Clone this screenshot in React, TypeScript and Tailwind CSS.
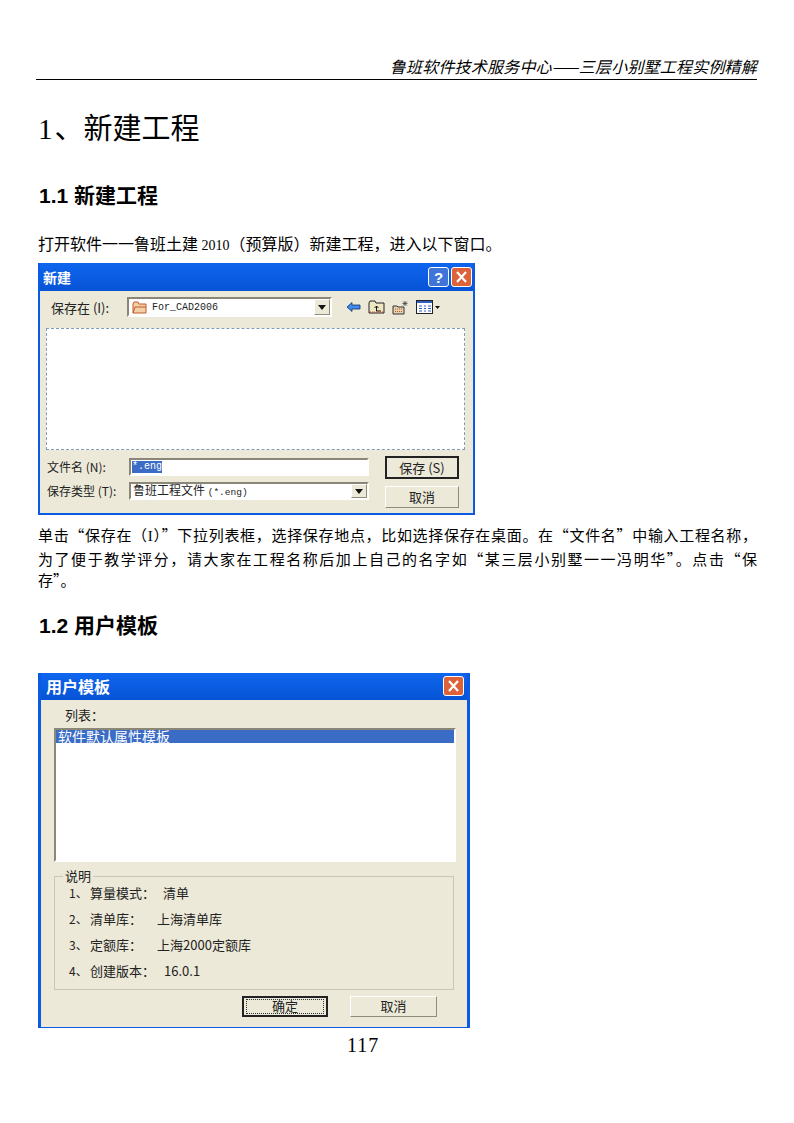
const ui = "font-['Noto_Sans_CJK_SC','Liberation_Sans',sans-serif]";
const latin = "font-['Liberation_Serif',serif]";
const mono = "font-['Liberation_Mono',monospace]";
const heading = "font-['Liberation_Sans','Noto_Sans_CJK_SC',sans-serif]";
const raised =
  "border border-t-white border-l-white border-r-[#8f8c7c] border-b-[#8f8c7c] bg-[#ece9d8]";
const sunken =
  "border-2 border-t-[#8a8778] border-l-[#8a8778] border-r-white border-b-white bg-white";

const ArrowDown = () => (
  <span className={`flex w-[16px] h-full items-center justify-center ${raised}`}>
    <svg width="8" height="5" viewBox="0 0 8 5">
      <path d="M0 0h8L4 5z" fill="#111" />
    </svg>
  </span>
);

const CloseBtn = () => (
  <span className="flex h-[20px] w-[21px] items-center justify-center rounded-[3px] border border-white bg-[#de6239]">
    <svg width="13" height="12" viewBox="0 0 13 12">
      <path d="M2 1l9 10M11 1L2 11" stroke="#fff" strokeWidth="2.2" fill="none" />
    </svg>
  </span>
);

const HelpBtn = () => (
  <span className="flex h-[20px] w-[21px] items-center justify-center rounded-[3px] border border-white bg-[#3f74d9] text-[15px] font-bold leading-none text-white font-['Liberation_Sans',sans-serif]">
    ?
  </span>
);

const ToolIcons = () => (
  <div className="ml-[14px] flex items-center gap-[7px]">
    <svg width="15" height="12" viewBox="0 0 15 12">
      <path d="M1 6l5-4.500V4h8v4H6v2.500z" fill="#3f8ae8" stroke="#12306e" strokeWidth="0.8" />
    </svg>
    <svg width="17" height="14" viewBox="0 0 17 14">
      <path d="M1 3l1-2h5l1 2h8v10H1z" fill="#efe6c4" stroke="#222" />
      <path d="M8.500 11V6M6.500 8l2-2 2 2M8.500 11H13" stroke="#111" fill="none" />
      <path d="M2 12h13" stroke="#d2452a" strokeDasharray="1 1" />
    </svg>
    <svg width="17" height="15" viewBox="0 0 17 15">
      <path d="M1 6h4l1 1h6v7H1z" fill="#e6d2b0" stroke="#333" />
      <path d="M3 9h7M3 11.500h7" stroke="#c4562e" strokeDasharray="1 1" />
      <path d="M13 1v5M10.500 3.500h5M11 1.500l4 4M15 1.500l-4 4" stroke="#444" strokeWidth="0.8" />
    </svg>
    <div className="flex items-center gap-[2px]">
      <svg width="17" height="14" viewBox="0 0 17 14">
        <rect x="0.500" y="0.500" width="16" height="13" fill="#fff" stroke="#222" />
        <path d="M1 1h15v2H1z" fill="#2f5fc4" />
        <path d="M3 6h3M8 6h2M12 6h3M3 8.500h3M8 8.500h2M12 8.500h3M3 11h3M8 11h2M12 11h3" stroke="#2f5fc4" />
      </svg>
      <svg width="5" height="3" viewBox="0 0 5 3">
        <path d="M0 0h5L2.500 3z" fill="#111" />
      </svg>
    </div>
  </div>
);

const SaveDialog = () => (
  <div className={`flex h-[252px] w-[437px] flex-col bg-[#0a5ae4] px-[2px] pb-[2px] ${ui}`}>
    <div className="flex h-[28px] shrink-0 items-center justify-between bg-gradient-to-b from-[#0f66ee] to-[#0753d6] pl-[3px] pr-[1px]">
      <span className="text-[14px] font-bold text-white">新建</span>
      <div className="flex gap-[2px]">
        <HelpBtn />
        <CloseBtn />
      </div>
    </div>
    <div className="flex-1 bg-[#ece9d8] px-[6px] pt-[6px] text-[12px] text-[#222]">
      <div className="flex h-[20px] items-center pl-[5px]">
        <span className="w-[76px] text-[13px] leading-none">保存在 (I):</span>
        <div className={`flex h-[20px] w-[205px] items-center justify-between ${sunken}`}>
          <span className={`flex items-center gap-[5px] pl-[3px] text-[10px] ${mono}`}>
            <svg width="15" height="13" viewBox="0 0 15 13">
              <path d="M1 3l1-2h4l1 2h7v9H1z" fill="#f3cfa6" stroke="#c45a2c" />
              <path d="M1 12l2-6h11" fill="none" stroke="#c45a2c" />
            </svg>
            For_CAD2006
          </span>
          <ArrowDown />
        </div>
        <ToolIcons />
      </div>
      <div className="mt-[11px] h-[122px] w-[419px] border border-dashed border-[#7f9db9] bg-white" />
      <div className="mt-[6px] flex items-start pl-[1px]">
        <div className="flex w-[322px] flex-col gap-[6px] pt-[2px]">
          <div className="flex h-[18px] items-center">
            <span className="w-[82px] leading-none">文件名 (N):</span>
            <div className={`flex h-[18px] flex-1 items-center pl-[1px] ${sunken}`}>
              <span className={`bg-[#3a6cc6] text-[10px] leading-[12px] text-white ${mono}`}>*.eng</span>
            </div>
          </div>
          <div className="flex h-[18px] items-center">
            <span className="w-[82px] leading-none">保存类型 (T):</span>
            <div className={`flex h-[18px] flex-1 items-center justify-between pl-[2px] ${sunken}`}>
              <span className="leading-none">
                鲁班工程文件 <span className={`text-[9.500px] ${mono}`}>(*.eng)</span>
              </span>
              <ArrowDown />
            </div>
          </div>
        </div>
        <div className="ml-[16px] flex w-[74px] flex-col gap-[7px] text-[13px]">
          <div className="flex h-[23px] items-center justify-center border-2 border-[#222] bg-[#ece9d8]">保存 (S)</div>
          <div className={`flex h-[22px] items-center justify-center ${raised}`}>取消</div>
        </div>
      </div>
    </div>
  </div>
);

const notes = [
  { num: "1、", label: "算量模式：", value: "清单", pad: "pl-[8px]" },
  { num: "2、", label: "清单库：", value: "上海清单库", pad: "pl-[15px]" },
  { num: "3、", label: "定额库：", value: "上海2000定额库", pad: "pl-[15px]" },
  { num: "4、", label: "创建版本：", value: "16.0.1", pad: "pl-[9px]" },
];

const TemplateDialog = () => (
  <div className={`flex h-[355px] w-[432px] flex-col bg-[#0a5ae4] px-[3px] pb-[1px] ${ui}`}>
    <div className="flex h-[27px] shrink-0 items-center justify-between rounded-t-[4px] bg-gradient-to-b from-[#0f66ee] to-[#0753d6] pl-[5px] pr-[3px]">
      <span className="text-[16px] font-bold text-white">用户模板</span>
      <CloseBtn />
    </div>
    <div className="flex flex-1 flex-col bg-[#ece9d8] px-[13px] pt-[7px] text-[13px] text-[#222]">
      <span className="pl-[11px] leading-[16px]">列表：</span>
      <div className={`mt-[5px] h-[134px] w-[402px] ${sunken}`}>
        <div className="h-[13px] bg-[#3a6cc6] pl-[2px] text-[14px] leading-[13px] text-white">软件默认属性模板</div>
      </div>
      <div className="relative mt-[14px] flex h-[114px] w-[400px] flex-col gap-[10px] border border-[#c9c6b4] pl-[14px] pt-[8px]">
        <span className="absolute -top-[8px] left-[8px] bg-[#ece9d8] px-[2px] text-[13px] leading-[14px]">说明</span>
        {notes.map((note) => (
          <div key={note.num} className="flex h-[16px] items-center leading-none">
            <span className="w-[21px] text-[12px]">{note.num}</span>
            <span>{note.label}</span>
            <span className={note.pad}>{note.value}</span>
          </div>
        ))}
      </div>
      <div className="mt-[6px] flex gap-[22px] pl-[188px]">
        <div className="flex h-[21px] w-[86px] items-center justify-center border-2 border-[#222] bg-[#ece9d8]">
          <span className="flex h-[15px] w-[78px] items-center justify-center border border-dotted border-[#333]">确定</span>
        </div>
        <div className={`flex h-[21px] w-[87px] items-center justify-center ${raised}`}>取消</div>
      </div>
    </div>
  </div>
);

export default function App() {
  return (
    <div className={`h-[1123px] w-[794px] bg-white pl-[38px] pr-[37px] pt-[56px] text-black ${ui}`}>
      <div className="-ml-[2px] flex h-[24px] items-center justify-end border-b border-black pb-[4px] text-[16px] italic leading-none tracking-[0.2px]">
        鲁班软件技术服务中心——三层小别墅工程实例精解
      </div>
      <h1 className="mt-[24px] h-[44px] text-[29px] leading-[44px]">
        <span className={`mr-[2px] ${latin}`}>1</span>、新建工程
      </h1>
      <h2 className={`mt-[34px] h-[28px] pl-[1px] text-[21px] font-bold leading-[28px] ${heading}`}>1.1 新建工程</h2>
      <p className="mt-[22px] h-[22px] text-[16px] leading-[22px]">
        打开软件一一鲁班土建 <span className={`text-[14px] ${latin}`}>2010</span>（预算版）新建工程，进入以下窗口。
      </p>
      <div className="mt-[9px]">
        <SaveDialog />
      </div>
      <p className="mt-[9px] text-[15px] leading-[21.500px]">
        <span className="block text-justify [text-align-last:justify]">
          单击“保存在（<span className={latin}>I</span>）”下拉列表框，选择保存地点，比如选择保存在桌面。在“文件名”中输入工程名称，
        </span>
        <span className="block text-justify [text-align-last:justify]">
          为了便于教学评分，请大家在工程名称后加上自己的名字如“某三层小别墅一一冯明华”。点击“保
        </span>
        <span className="block">存”。</span>
      </p>
      <h2 className={`mt-[21px] h-[28px] pl-[1px] text-[21px] font-bold leading-[28px] ${heading}`}>1.2 用户模板</h2>
      <div className="mt-[33px]">
        <TemplateDialog />
      </div>
      <div className={`mt-[5px] pl-[309px] text-[20px] leading-[24px] tracking-[1px] ${latin}`}>117</div>
    </div>
  );
}
